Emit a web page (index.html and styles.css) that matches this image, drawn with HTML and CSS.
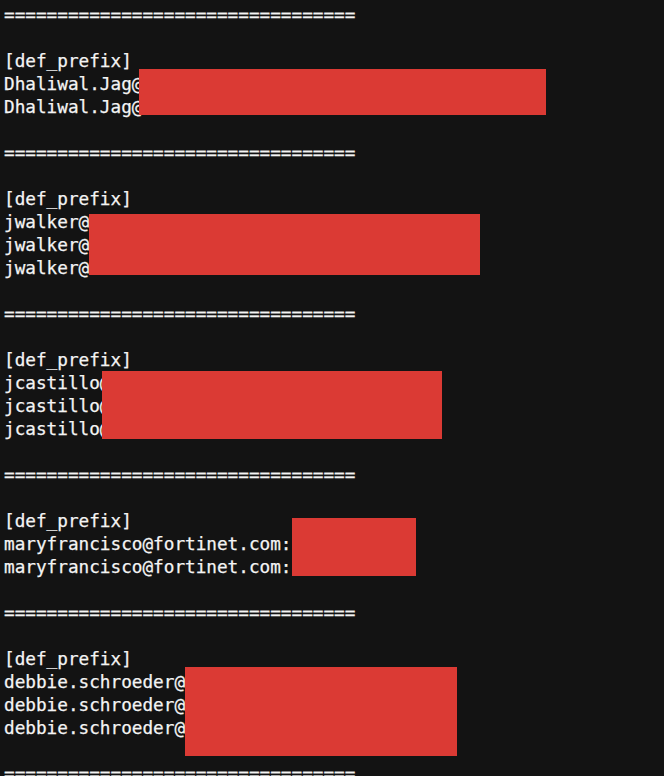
FILE: index.html
```html
<!DOCTYPE html>
<html>
<head>
<meta charset="utf-8">
<link rel="stylesheet" href="styles.css">
</head>
<body>
<main class="console">
  <div class="line">=================================</div>
  <div class="line"> </div>
  <div class="line">[def_prefix]</div>
  <div class="line">Dhaliwal.Jag@</div>
  <div class="line">Dhaliwal.Jag@</div>
  <div class="line"> </div>
  <div class="line">=================================</div>
  <div class="line"> </div>
  <div class="line">[def_prefix]</div>
  <div class="line">jwalker@</div>
  <div class="line">jwalker@</div>
  <div class="line">jwalker@</div>
  <div class="line"> </div>
  <div class="line">=================================</div>
  <div class="line"> </div>
  <div class="line">[def_prefix]</div>
  <div class="line">jcastillo@</div>
  <div class="line">jcastillo@</div>
  <div class="line">jcastillo@</div>
  <div class="line"> </div>
  <div class="line">=================================</div>
  <div class="line"> </div>
  <div class="line">[def_prefix]</div>
  <div class="line">maryfrancisco@fortinet.com:</div>
  <div class="line">maryfrancisco@fortinet.com:</div>
  <div class="line"> </div>
  <div class="line">=================================</div>
  <div class="line"> </div>
  <div class="line">[def_prefix]</div>
  <div class="line">debbie.schroeder@</div>
  <div class="line">debbie.schroeder@</div>
  <div class="line">debbie.schroeder@</div>
  <div class="line"> </div>
  <div class="line">=================================</div>

  <div class="redact r1"></div>
  <div class="redact r2"></div>
  <div class="redact r3"></div>
  <div class="redact r4"></div>
  <div class="redact r5"></div>
</main>
</body>
</html>
```
FILE: styles.css
```css
html, body {
  margin: 0;
  padding: 0;
  background: #131313;
  overflow: hidden;
}

.console {
  position: relative;
  padding: 4px 0 0 4px;
  height: 776px;
  box-sizing: border-box;
  font-family: "DejaVu Sans Mono", "Liberation Mono", monospace;
  font-size: 17.7px;
  color: #f4f4f4;
  -webkit-text-stroke: 0.25px #f4f4f4;
}

.line {
  height: 23px;
  line-height: 23px;
  white-space: pre;
}

.redact {
  position: absolute;
  background: #db3a34;
}

.r1 { left: 139px; top: 69px; width: 407px; height: 46px; }
.r2 { left: 89px; top: 214px; width: 391px; height: 61px; }
.r3 { left: 102px; top: 371px; width: 340px; height: 68px; }
.r4 { left: 292px; top: 518px; width: 124px; height: 58px; }
.r5 { left: 185px; top: 667px; width: 272px; height: 89px; }
```
